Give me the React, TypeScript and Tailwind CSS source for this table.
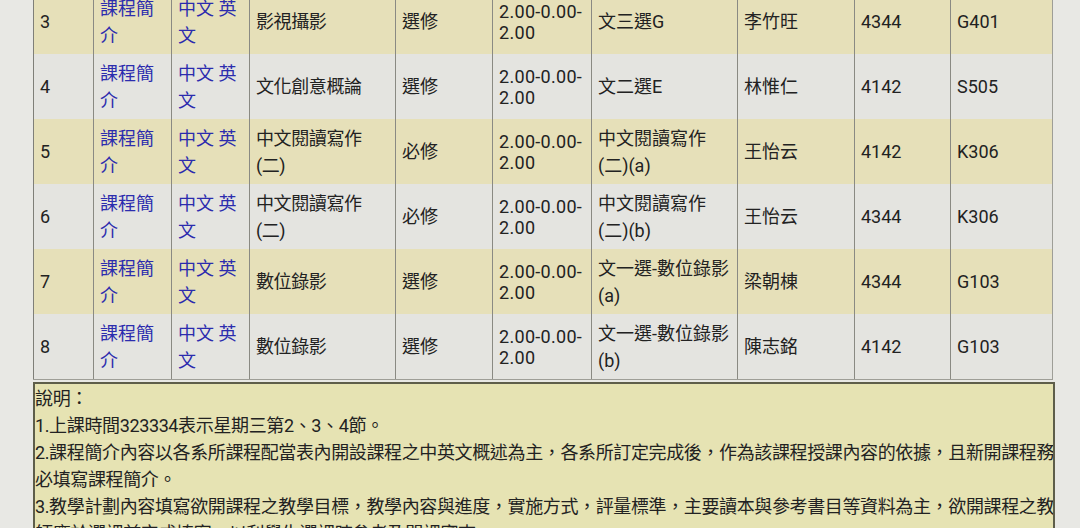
import React from 'react'

type Row = {
  no: string
  name: string[]
  type: string
  cls: string[]
  teacher: string
  time: string
  room: string
}

const ROWS: Row[] = [
  { no: '3', name: ['影視攝影'], type: '選修', cls: ['文三選G'], teacher: '李竹旺', time: '4344', room: 'G401' },
  { no: '4', name: ['文化創意概論'], type: '選修', cls: ['文二選E'], teacher: '林惟仁', time: '4142', room: 'S505' },
  { no: '5', name: ['中文閱讀寫作', '(二)'], type: '必修', cls: ['中文閱讀寫作', '(二)(a)'], teacher: '王怡云', time: '4142', room: 'K306' },
  { no: '6', name: ['中文閱讀寫作', '(二)'], type: '必修', cls: ['中文閱讀寫作', '(二)(b)'], teacher: '王怡云', time: '4344', room: 'K306' },
  { no: '7', name: ['數位錄影'], type: '選修', cls: ['文一選-數位錄影', '(a)'], teacher: '梁朝棟', time: '4344', room: 'G103' },
  { no: '8', name: ['數位錄影'], type: '選修', cls: ['文一選-數位錄影', '(b)'], teacher: '陳志銘', time: '4142', room: 'G103' },
]

const NOTES = [
  '說明：',
  '1.上課時間323334表示星期三第2、3、4節。',
  '2.課程簡介內容以各系所課程配當表內開設課程之中英文概述為主，各系所訂定完成後，作為該課程授課內容的依據，且新開課程務',
  '必填寫課程簡介。',
  '3.教學計劃內容填寫欲開課程之教學目標，教學內容與進度，實施方式，評量標準，主要讀本與參考書目等資料為主，欲開課程之教',
  '師應於選課前完成填寫，以利學生選課時參考及開課審查。',
]

// 單一儲存格：只有左框線，垂直置中
function Cell({ children, first = false }: { children: React.ReactNode; first?: boolean }) {
  return (
    <div
      className={`flex items-center px-[6px] whitespace-nowrap ${
        first ? 'border-l border-[#7f7f78]' : 'border-l border-[#8a8a83]'
      }`}
    >
      {children}
    </div>
  )
}

function Lines({ lines, leading }: { lines: string[]; leading: string }) {
  return (
    <div className={leading}>
      {lines.map((l, i) => (
        <div key={i}>{l}</div>
      ))}
    </div>
  )
}

export default function App() {
  return (
    <div className="w-[1080px] h-[528px] overflow-hidden bg-[#e8e8e4] pl-[33px] text-[18px] text-[#222] font-['Roboto','Noto_Sans_CJK_TC',sans-serif]">
      {/* 課程表 */}
      <div className="-mt-[11px] w-[1020px] border-r border-b border-[#9e9e97]">
        {ROWS.map((r, i) => (
          <div
            key={r.no}
            className={`grid h-[65px] grid-cols-[60px_78px_78px_146px_97px_99px_146px_117px_96px_101px] ${
              i % 2 === 0 ? 'bg-[#e6e0b9]' : 'bg-[#e4e4e0]'
            }`}
          >
            <Cell first>{r.no}</Cell>
            <Cell>
              <Lines lines={['課程簡', '介']} leading="leading-[27px] text-[#2c2cae]" />
            </Cell>
            <Cell>
              <div className="leading-[27px] text-[#2c2cae]">
                <div>
                  <span>中文</span> <span>英</span>
                </div>
                <div>文</div>
              </div>
            </Cell>
            <Cell>
              <Lines lines={r.name} leading="leading-[27px] tracking-[-0.4px]" />
            </Cell>
            <Cell>{r.type}</Cell>
            <Cell>
              <Lines lines={['2.00-0.00-', '2.00']} leading="leading-[21px] tracking-[0.3px]" />
            </Cell>
            <Cell>
              <Lines lines={r.cls} leading="leading-[27px]" />
            </Cell>
            <Cell>{r.teacher}</Cell>
            <Cell>{r.time}</Cell>
            <Cell>{r.room}</Cell>
          </div>
        ))}
      </div>

      {/* 說明 */}
      <div className="mt-[2px] w-[1022px] h-[160px] overflow-hidden border-2 border-[#5e5e4a] bg-[#e6e3b3] pt-[1px] leading-[27px] tracking-[-0.37px]">
        {NOTES.map((n, i) => (
          <div key={i} className="whitespace-nowrap">
            {n}
          </div>
        ))}
      </div>
    </div>
  )
}
